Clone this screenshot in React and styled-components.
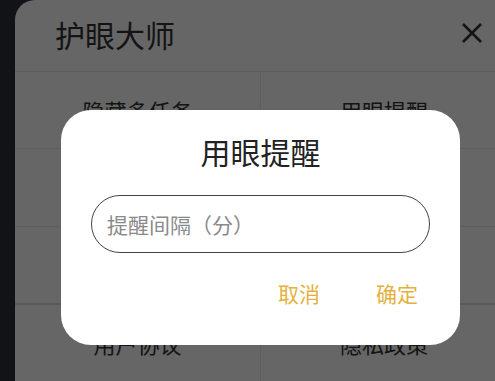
import React from 'react';
import styled, { createGlobalStyle } from 'styled-components';

const GlobalStyle = createGlobalStyle`
  html, body {
    margin: 0;
    padding: 0;
    background: #2e3039;
    overflow: hidden;
    font-family: "Noto Sans CJK SC", "Noto Sans", sans-serif;
  }
`;

const Page = styled.div`
  width: 495px;
  height: 381px;
  overflow: hidden;
  padding-left: 15px;
  box-sizing: border-box;
`;

const Panel = styled.div`
  width: 492px;
  min-height: 455px;
  background: #fff;
  border-top-left-radius: 20px;
`;

const Header = styled.div`
  height: 72px;
  display: flex;
  align-items: center;
  justify-content: space-between;
  padding: 0 24px 0 40px;
  box-sizing: border-box;
  border-bottom: 1px solid #e6e6e6;
`;

const Title = styled.div`
  font-size: 30px;
  color: #333;
  line-height: 1;
  margin-top: -4px;
`;

const Close = styled.svg`
  width: 22px;
  height: 22px;
  margin-top: -5px;
`;

const Grid = styled.div`
  display: grid;
  grid-template-columns: 246px 246px;
`;

const Cell = styled.div`
  height: ${(p) => p.$h}px;
  display: flex;
  align-items: center;
  justify-content: center;
  font-size: 22px;
  color: #333;
  box-sizing: border-box;
  border-bottom: ${(p) => (p.$thick ? '2px solid #dcdcdc' : '1px solid #ececec')};
  border-right: ${(p) => (p.$left ? '1px solid #ececec' : 'none')};
`;

const Overlay = styled.div`
  position: fixed;
  inset: 0;
  background: rgba(0, 0, 0, 0.6);
`;

const Dialog = styled.div`
  position: absolute;
  left: 61px;
  top: 110px;
  width: 399px;
  height: 235px;
  box-sizing: border-box;
  background: #fff;
  border-radius: 30px;
  padding: 21px 30px 0;
  display: flex;
  flex-direction: column;
`;

const DialogTitle = styled.div`
  font-size: 30px;
  line-height: 40px;
  text-align: center;
  color: #222;
`;

const Input = styled.input`
  margin-top: 24px;
  height: 58px;
  box-sizing: border-box;
  border: 1px solid #444;
  border-radius: 29px;
  padding: 0 15px;
  font-family: inherit;
  font-size: 21px;
  color: #333;
  outline: none;
  &::placeholder {
    color: #8a8a8a;
  }
`;

const Actions = styled.div`
  margin-top: 25px;
  display: flex;
  justify-content: flex-end;
  gap: 32px;
`;

const Action = styled.button`
  background: none;
  border: none;
  padding: 0 12px;
  font-family: inherit;
  font-size: 21px;
  line-height: 30px;
  color: #e4b23c;
  cursor: pointer;
`;

const rows = [
  ['隐藏多任务', '用眼提醒'],
  ['定时休息', '护眼模式'],
  ['意见反馈', '关于我们'],
  ['用户协议', '隐私政策'],
];

const heights = [77, 78, 78, 77];

export default function App() {
  return (
    <Page>
      <GlobalStyle />
      <Panel>
        <Header>
          <Title>护眼大师</Title>
          <Close viewBox="0 0 22 22">
            <path d="M2 2 L20 20 M20 2 L2 20" stroke="#333" strokeWidth="2.6" fill="none" />
          </Close>
        </Header>
        <Grid>
          {rows.map((r, i) => (
            <React.Fragment key={i}>
              <Cell $left $h={heights[i]} $thick={i === 2}>{r[0]}</Cell>
              <Cell $h={heights[i]} $thick={i === 2}>{r[1]}</Cell>
            </React.Fragment>
          ))}
        </Grid>
      </Panel>
      <Overlay>
        <Dialog>
          <DialogTitle>用眼提醒</DialogTitle>
          <Input placeholder="提醒间隔（分）" />
          <Actions>
            <Action>取消</Action>
            <Action>确定</Action>
          </Actions>
        </Dialog>
      </Overlay>
    </Page>
  );
}
